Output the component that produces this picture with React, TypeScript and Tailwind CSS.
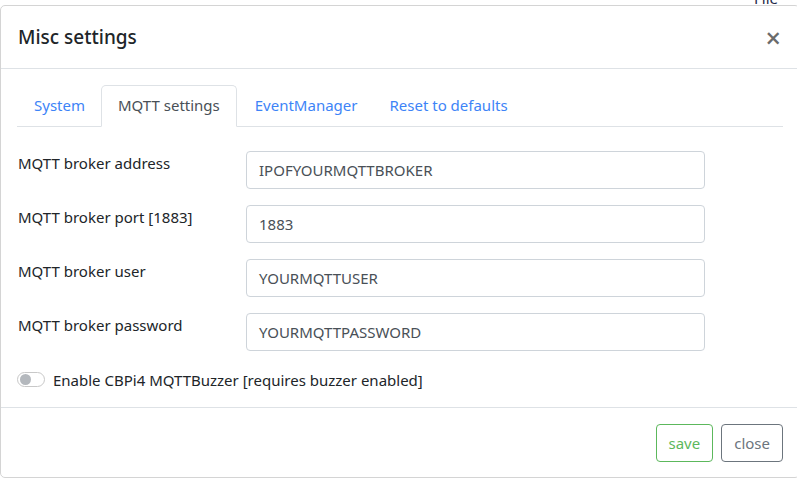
import React from 'react'

const fields = [
  { label: 'MQTT broker address', value: 'IPOFYOURMQTTBROKER' },
  { label: 'MQTT broker port [1883]', value: '1883' },
  { label: 'MQTT broker user', value: 'YOURMQTTUSER' },
  { label: 'MQTT broker password', value: 'YOURMQTTPASSWORD' },
]

function App() {
  return (
    <div
      className="relative h-[478px] w-[797px] overflow-hidden bg-white pt-[5px] text-[#212529]"
      style={{ fontFamily: '"Noto Sans", "Open Sans", sans-serif' }}
    >
      {/* page behind the dialog */}
      <div className="absolute right-[19px] top-[-13px] text-[15px] text-[#1e2a4a]">File</div>

      <div className="relative w-[800px] rounded-[5px] border border-[#d4d4d4] bg-white">
        <header className="flex h-[63px] items-center justify-between border-b border-[#dee2e6] px-[17px]">
          <h5 className="text-[19px] font-medium leading-none">Misc settings</h5>
          <button className="mr-[1px] text-[27px] font-medium leading-none text-[#6b6b6b]">×</button>
        </header>

        <div className="px-[16px] pt-[16px]">
          <ul className="flex border-b border-[#dee2e6] text-[15px]">
            <li className="py-[9px] pl-[17px] pr-[16px] text-[#3d84f7]">System</li>
            <li className="-mb-px rounded-t-[5px] border border-[#dee2e6] border-b-white bg-white px-[16px] py-[8px] text-[#495057]">
              MQTT settings
            </li>
            <li className="py-[9px] pl-[18px] pr-[16px] text-[#3d84f7]">EventManager</li>
            <li className="px-[16px] py-[9px] text-[#3d84f7]">Reset to defaults</li>
          </ul>

          <div className="flex flex-col gap-[16px] pt-[24px]">
            {fields.map((f) => (
              <div key={f.label} className="flex items-start">
                <label className="w-[229px] pl-[1px] pt-[1px] text-[15px]">{f.label}</label>
                <div className="flex h-[38px] w-[459px] items-center rounded-[4px] border border-[#ced4da] px-[12px] pt-[1px] text-[15px] text-[#495057]">
                  {f.value}
                </div>
              </div>
            ))}
          </div>

          <div className="flex items-center gap-[8px] pb-[16px] pt-[18px] text-[15px]">
            <span className="flex h-[15px] w-[28px] items-center rounded-full border border-[#c8c8c8] px-[2px]">
              <span className="h-[11px] w-[11px] rounded-full bg-[#b4b8bd]" />
            </span>
            <span>Enable CBPi4 MQTTBuzzer [requires buzzer enabled]</span>
          </div>
        </div>

        <footer className="flex h-[70px] items-center justify-end gap-[8px] border-t border-[#dee2e6] px-[16px]">
          <button className="h-[38px] rounded-[4px] border border-[#5cb85c] px-[12px] pt-[1px] text-[15px] text-[#5cb85c]">
            save
          </button>
          <button className="h-[38px] rounded-[4px] border border-[#6c757d] px-[12px] pt-[1px] text-[15px] text-[#6c757d]">
            close
          </button>
        </footer>
      </div>
    </div>
  )
}

export default App
